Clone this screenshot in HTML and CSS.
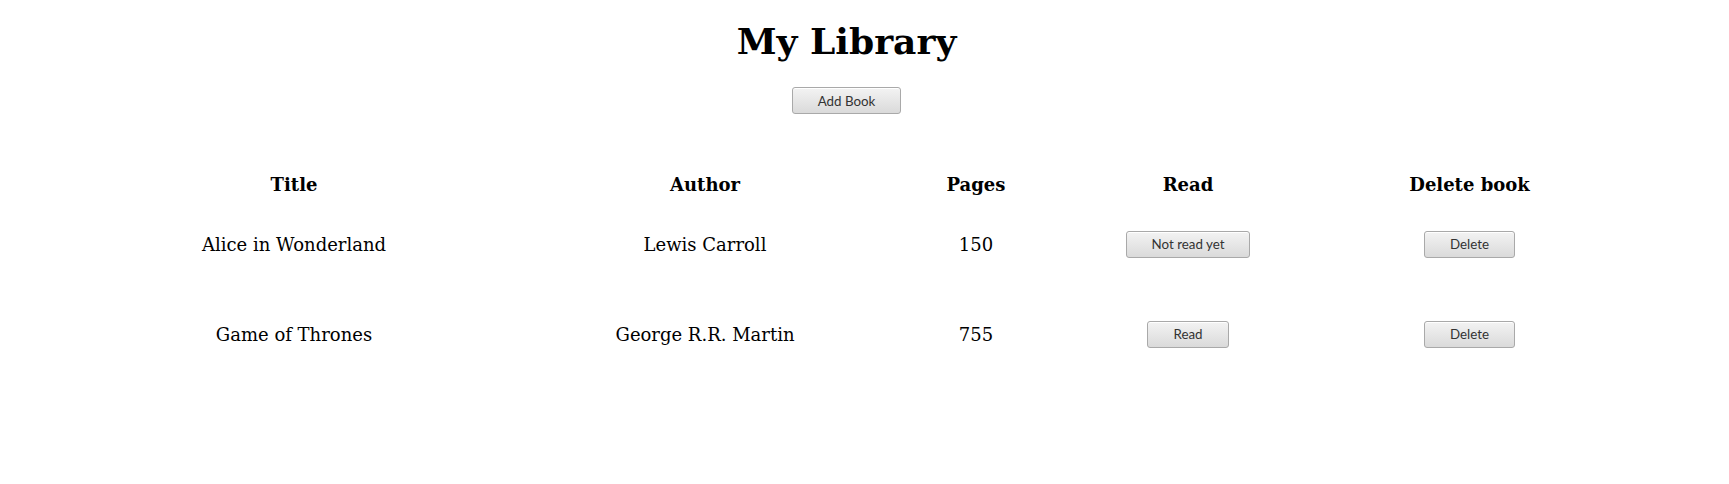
FILE: index.html
```html
<!DOCTYPE html>
<html>
<head>
<meta charset="utf-8">
<title>My Library</title>
<link rel="stylesheet" href="styles.css">
</head>
<body>
<main class="app">
  <h1 class="heading">My Library</h1>
  <div class="actions"><button class="btn">Add Book</button></div>
  <table class="books">
    <thead>
      <tr><th class="c-title">Title</th><th class="c-author">Author</th><th class="c-pages">Pages</th><th class="c-read">Read</th><th class="c-del">Delete book</th></tr>
    </thead>
    <tbody>
      <tr><td>Alice in Wonderland</td><td>Lewis Carroll</td><td>150</td><td><button class="btn">Not read yet</button></td><td><button class="btn">Delete</button></td></tr>
      <tr><td>Game of Thrones</td><td>George R.R. Martin</td><td>755</td><td><button class="btn">Read</button></td><td><button class="btn">Delete</button></td></tr>
    </tbody>
  </table>
</main>
</body>
</html>
```

FILE: styles.css
```css
html, body { background: #fff; }
body {
  margin: 8px;
  font-family: "DejaVu Serif", serif;
  font-size: 18px;
  color: #000;
}
.app {
  margin-right: 36px;
}
.heading {
  margin: 12px 0 0;
  text-align: center;
  font-size: 36px;
  line-height: 42px;
  font-weight: bold;
}
.actions {
  display: flex;
  justify-content: center;
  margin-top: 25px;
}
.btn {
  font-family: "Lato", sans-serif;
  font-size: 13.33px;
  color: #333;
  height: 27px;
  padding: 0 25px;
  border: 1px solid #a9a9a9;
  border-radius: 3px;
  background: linear-gradient(#f3f3f3, #dadada);
  box-shadow: inset 0 1px 0 #fff;
}
.books {
  width: 100%;
  border-collapse: collapse;
  margin-top: 55px;
  table-layout: fixed;
  font-size: 18px;
}
.books th {
  height: 30px;
  font-weight: bold;
  text-align: center;
  padding: 0;
}
.books td {
  height: 90px;
  text-align: center;
  padding: 0;
}
.c-title { width: 572px; }
.c-author { width: 250px; }
.c-pages { width: 292px; }
.c-read { width: 132px; }
.c-del { width: auto; }
```
